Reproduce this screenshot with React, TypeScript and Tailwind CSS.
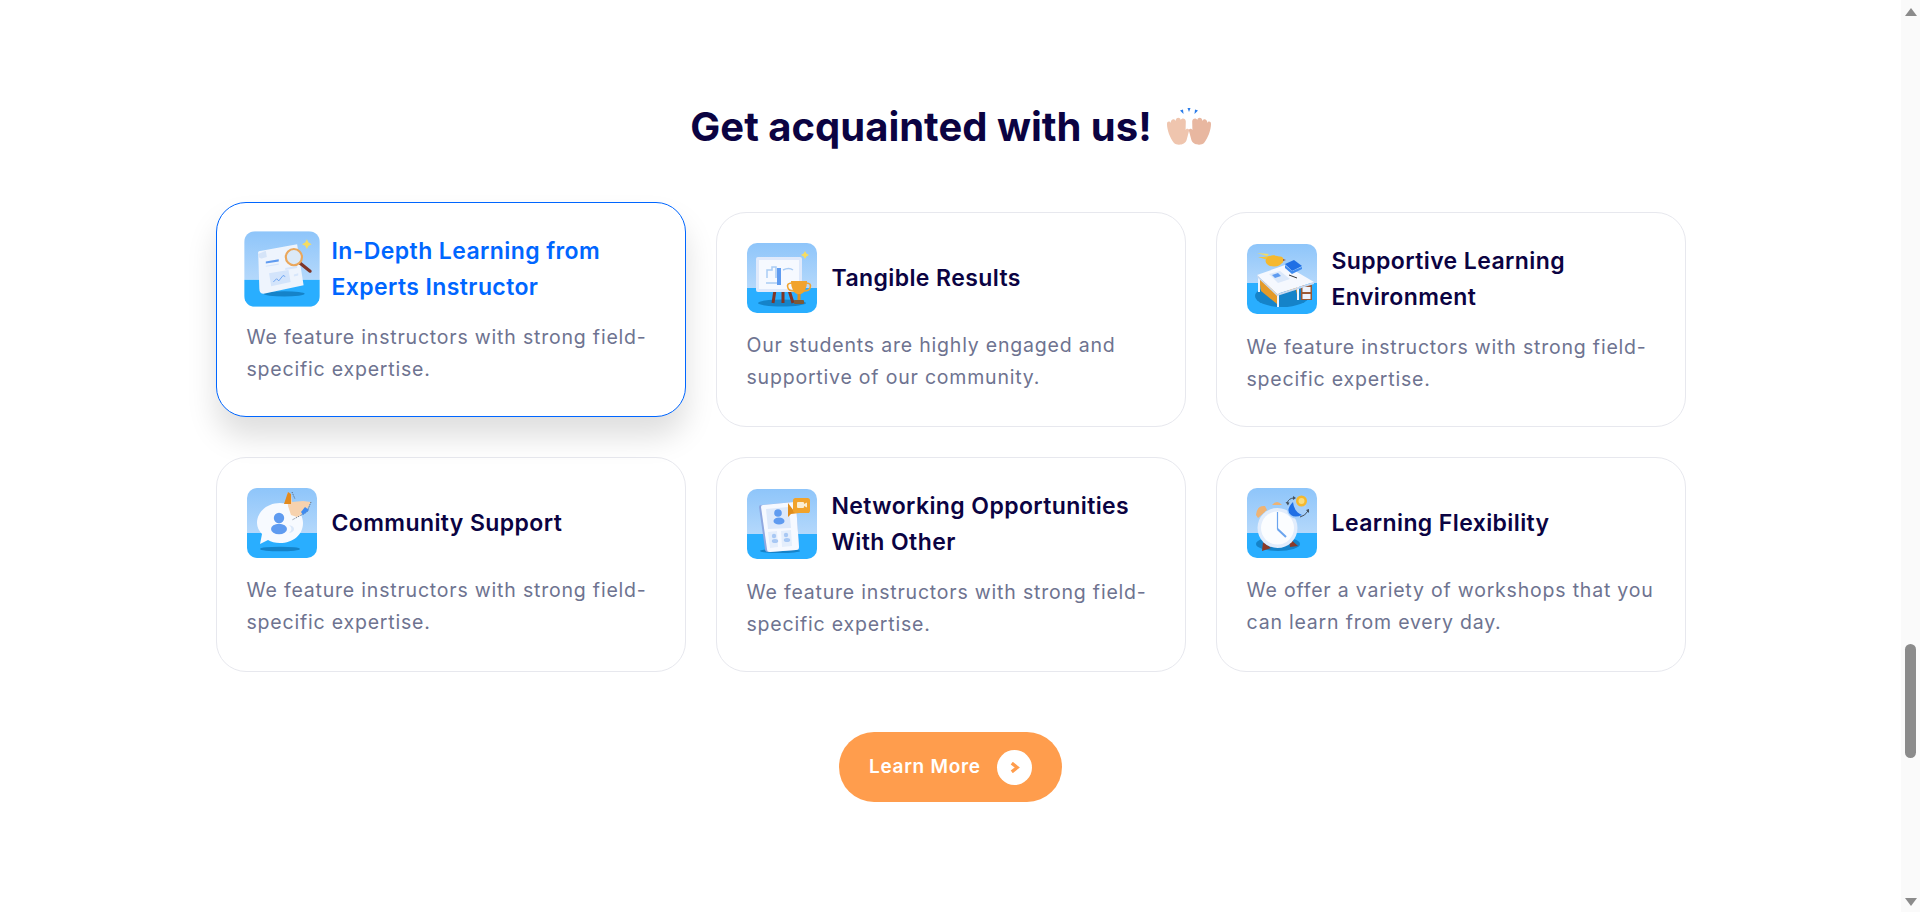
const poppins = "font-['Inter','Liberation_Sans',sans-serif]";

function Backdrop({ horizon = 45 }: { horizon?: number }) {
  return (
    <>
      <defs>
        <linearGradient id="sky" x1="0" y1="0" x2="0" y2="1">
          <stop offset="0" stopColor="#8ec5fa" />
          <stop offset="1" stopColor="#b4d8fb" />
        </linearGradient>
      </defs>
      <rect width="70" height={horizon} fill="url(#sky)" />
      <rect y={horizon} width="70" height={70 - horizon} fill="#29aeff" />
    </>
  );
}

function Star({ x, y, s = 4 }: { x: number; y: number; s?: number }) {
  return (
    <path
      d={`M${x} ${y - s}L${x + s * 0.35} ${y - s * 0.35}L${x + s} ${y}L${x + s * 0.35} ${y + s * 0.35}L${x} ${y + s}L${x - s * 0.35} ${y + s * 0.35}L${x - s} ${y}L${x - s * 0.35} ${y - s * 0.35}Z`}
      fill="#f6dc62"
    />
  );
}

function ResearchIcon() {
  return (
    <svg viewBox="0 0 70 70" className="block h-full w-full">
      <Backdrop />
      <ellipse cx="37" cy="58" rx="19" ry="2.5" fill="#1583c9" />
      <path d="M13 21Q12 18 16 18L49 12L55 50L18 58Q14 58 14 53Z" fill="#eef4fd" />
      <path d="M13 21Q13 26 17 25L21 24L20 18Z" fill="#d5e4f8" />
      <path d="M20 28L32 26V28L20 30Z" fill="#5f9bf0" />
      <path d="M20 32L32 30V31L20 33ZM38 34L49 32V34L38 36ZM46 40L50 39V41L46 42Z" fill="#d7e6fb" />
      <path d="M23 39L41 36L43 47L25 51Z" fill="#d3e4fb" />
      <path d="M27 47L30 44L32 46L36 41L38 42" fill="none" stroke="#5f9bf0" strokeWidth="0.8" />
      <path d="M51 29L61 37" stroke="#7f3527" strokeWidth="3" strokeLinecap="round" />
      <circle cx="46" cy="24" r="7.5" fill="#dbe9f7" stroke="#eaa75c" strokeWidth="2" />
      <Star x={58} y={12} s={4.5} />
    </svg>
  );
}

function ResultsIcon() {
  return (
    <svg viewBox="0 0 70 70" className="block h-full w-full">
      <Backdrop />
      <ellipse cx="35" cy="60" rx="24" ry="3.5" fill="#1583c9" />
      <path d="M28 47L26 60M36 47V60M42 47L46 60" stroke="#7f3527" strokeWidth="3" />
      <rect x="9" y="14" width="46" height="35" rx="2" fill="#dfe9fb" />
      <rect x="12" y="17" width="40" height="29" fill="#f6f9ff" />
      <path d="M20 35V27H25V24H29V35" fill="none" stroke="#a9cbf4" strokeWidth="1.5" />
      <rect x="30" y="25" width="4" height="17" fill="#5f9bf0" />
      <path d="M19 40H30M36 27Q42 24 46 27" fill="none" stroke="#a9cbf4" strokeWidth="1.5" />
      <path d="M44 38H60Q60 50 52 52Q44 50 44 38Z" fill="#f1a32c" />
      <path d="M45 40Q39 40 41 45Q42 48 47 48M59 40Q65 40 63 45Q62 48 57 48" fill="none" stroke="#f1a32c" strokeWidth="1.6" />
      <rect x="50.5" y="51" width="3" height="6" fill="#e08d1c" />
      <rect x="47" y="57" width="10" height="4" rx="1" fill="#7c5a38" />
      <Star x={58} y={12} s={4} />
    </svg>
  );
}

function DeskIcon() {
  return (
    <svg viewBox="0 0 70 70" className="block h-full w-full">
      <Backdrop horizon={39} />
      <ellipse cx="35" cy="52" rx="27" ry="11" fill="#1583c9" />
      <path d="M12 34L30 47V60L14 47Z" fill="#e49a28" />
      <path d="M34 47L51 39V55L49 46Z" fill="#e49a28" />
      <path d="M11 33V48H13V35ZM30 48V63H32V48ZM50 42V56H52V42Z" fill="#eef4fd" />
      <rect x="54" y="41" width="11" height="15" fill="#9b5a34" />
      <rect x="55.5" y="43" width="8" height="5" fill="#eef4fd" />
      <rect x="55.5" y="50" width="8" height="5" fill="#eef4fd" />
      <path d="M10 31L38 21L67 38L30 50Z" fill="#f5f8fe" />
      <path d="M10 31L30 50L67 38V40L30 52L10 33Z" fill="#c7d8ef" />
      <path d="M22 30L33 27L43 35L31 39Z" fill="#dbe8fa" />
      <path d="M25 31L31 29L34 32L28 34Z" fill="#5f9bf0" />
      <path d="M38 20L47 16L55 22L45 27Z" fill="#1f6fe5" />
      <path d="M38 24L45 30L55 25V23L45 27L38 21Z" fill="#3f8bef" />
      <path d="M42 31L50 34" stroke="#222" strokeWidth="0.9" />
      <path d="M10 9L20 12L22 10L10 9Z" fill="#f6dc62" />
      <path d="M11 13L24 17L28 11L16 13Z" fill="#f3c63e" />
      <ellipse cx="27" cy="17" rx="8.5" ry="5.5" fill="#f5b82e" />
      <circle cx="33" cy="16" r="3.5" fill="#f5b82e" />
      <path d="M36 15L39 16L36 17Z" fill="#9b5a34" />
    </svg>
  );
}

function CommunityIcon() {
  return (
    <svg viewBox="0 0 70 70" className="block h-full w-full">
      <Backdrop />
      <ellipse cx="33" cy="61" rx="20" ry="2.3" fill="#1583c9" />
      <path d="M33 15C46 15 56 24 56 35C56 47 46 55 33 55C28 55 24 54 21 52L13 56L15 46C12 43 10 39 10 35C10 24 20 15 33 15Z" fill="#f7faff" />
      <circle cx="32" cy="30" r="5.2" fill="#5f9bf0" />
      <ellipse cx="32" cy="41" rx="8" ry="5.3" fill="#5f9bf0" />
      <path d="M42 37Q47 41 42 45Q47 44 47 41Q47 38 42 37Z" fill="#dbe8fa" />
      <path d="M40 5L44 6L45 14L56 13L64 14L58 24L50 29L44 27L41 18Z" fill="#f7d2ae" />
      <path d="M41 4L44 6L44 16L37 16Z" fill="#e38a1e" />
      <path d="M45 4L48 11M64 14L60 24L45 32" fill="none" stroke="#3d4a60" strokeWidth="0.8" strokeDasharray="1 1" />
      <path d="M58 19L62 22L56 27L54 24Z" fill="#3f8bef" />
    </svg>
  );
}

function NetworkIcon() {
  return (
    <svg viewBox="0 0 70 70" className="block h-full w-full">
      <Backdrop />
      <ellipse cx="33" cy="62" rx="20" ry="2" fill="#1583c9" />
      <path d="M14 16L47 13Q49 13 49 15L52 58Q52 61 49 61L21 63Q18 63 18 60L12 18Q12 16 14 16Z" fill="#8fa8e0" />
      <path d="M16 16L47 13Q49 13 49 15L52 58Q52 61 49 61L23 63Q20 63 20 60L14 18Q14 16 16 16Z" fill="#f6f9ff" />
      <path d="M19 20L42 18L44 39L21 40Z" fill="#dde9fb" />
      <circle cx="31" cy="24" r="3.8" fill="#5f9bf0" />
      <ellipse cx="32" cy="32" rx="5.5" ry="3.6" fill="#5f9bf0" />
      <path d="M21 43L30 42L31 58L23 59ZM34 42L44 41L45 57L35 58Z" fill="#e4eefc" />
      <circle cx="27" cy="47" r="2.2" fill="#a8c8f4" />
      <ellipse cx="28" cy="52" rx="3.2" ry="2" fill="#a8c8f4" />
      <circle cx="39" cy="46" r="2.2" fill="#a8c8f4" />
      <ellipse cx="40" cy="51" rx="3.2" ry="2" fill="#a8c8f4" />
      <path d="M41 28V14L47 22L52 24L44 25Z" fill="#e08d1c" />
      <rect x="46" y="9" width="17" height="15" rx="2.5" fill="#f1a32c" />
      <path d="M54 24H62L62 20Z" fill="#f1a32c" />
      <rect x="50" y="13" width="7" height="6" rx="1" fill="#fbeed2" />
      <path d="M57 15L60 13.5V18.5L57 17Z" fill="#fbeed2" />
    </svg>
  );
}

function ClockIcon() {
  return (
    <svg viewBox="0 0 70 70" className="block h-full w-full">
      <Backdrop />
      <ellipse cx="31" cy="56" rx="22" ry="7" fill="#1583c9" />
      <path d="M16 54L15 63L24 60ZM42 50L51 58L43 59Z" fill="#8a3a28" />
      <path d="M9 27Q10 17 18 18L20 22L11 30Z" fill="#eeb374" />
      <path d="M25 17Q30 11 35 17Z" fill="#eeb374" />
      <circle cx="30.5" cy="40" r="20" fill="#e2edfc" />
      <circle cx="30.5" cy="40" r="16.5" fill="#fbfdff" />
      <path d="M30.5 24V41" fill="none" stroke="#6aa4ee" strokeWidth="1.2" />
      <path d="M30.5 41L39 49" stroke="#6aa4ee" strokeWidth="2" />
      <circle cx="50" cy="21" r="10" fill="#a6d0fb" />
      <path d="M46 14Q38 22 44 27Q48 30 55 27Q47 24 46 14Z" fill="#1f6fe5" />
      <circle cx="54.5" cy="13" r="5.5" fill="#f5b82e" />
      <circle cx="54.5" cy="13" r="3" fill="#fbdc7a" />
      <path d="M47 10Q42 10 40 15M53 29Q58 28 61 23" fill="none" stroke="#45525f" strokeWidth="1" />
      <path d="M46 8L49 10L46 12ZM38.5 14L41 17.5L42.5 14.5ZM59 22L62 21L62 25Z" fill="#45525f" />
    </svg>
  );
}

function Hands() {
  // one fat raised hand, mirrored for the other side
  const hand = "M7 35C3 30 0 22 0 16C0 13 3 13 3.6 15C3.6 11 7.6 10 8.6 13C8.8 9 13 8.6 13.8 12C14.6 9.6 18.8 10 18.8 13.4L18.6 22C19.6 20 22.6 20.4 22 23L19.6 32C18.4 37 10 38 7 35Z";
  return (
    <svg viewBox="0 0 44 38" className="h-[38px] w-[44px] shrink-0">
      <path d="M20.5 0H23.5L22 4ZM13 2.5L16 1.5L16.5 6ZM28 1.5L31 2.5L27.5 6Z" fill="#2b7de9" />
      <path d={hand} fill="#efc5ae" />
      <g transform="translate(44 0) scale(-1 1)">
        <path d={hand} fill="#e8b7a0" />
      </g>
    </svg>
  );
}

const cards = [
  { icon: <ResearchIcon />, title: "In-Depth Learning from Experts Instructor", text: "We feature instructors with strong field-specific expertise.", active: true },
  { icon: <ResultsIcon />, title: "Tangible Results", text: "Our students are highly engaged and supportive of our community." },
  { icon: <DeskIcon />, title: "Supportive Learning Environment", text: "We feature instructors with strong field-specific expertise." },
  { icon: <CommunityIcon />, title: "Community Support", text: "We feature instructors with strong field-specific expertise." },
  { icon: <NetworkIcon />, title: "Networking Opportunities With Other", text: "We feature instructors with strong field-specific expertise." },
  { icon: <ClockIcon />, title: "Learning Flexibility", text: "We offer a variety of workshops that you can learn from every day." },
];

function Card({ icon, title, text, active }: { icon: React.ReactNode; title: string; text: string; active?: boolean }) {
  return (
    <div
      className={
        active
          ? "rounded-[30px] border border-[#0066ff] bg-white p-[30px] pb-[31px] -translate-y-[10px] shadow-[0_20px_30px_rgba(0,0,0,0.13)]"
          : "rounded-[30px] border border-[#e7e8ee] bg-white p-[30px] pb-[31px]"
      }
    >
      <div className="flex items-center gap-[15px]">
        <div className={active ? "h-[70px] w-[70px] shrink-0 overflow-hidden rounded-[10px] scale-[1.08]" : "h-[70px] w-[70px] shrink-0 overflow-hidden rounded-[10px]"}>
          {icon}
        </div>
        <h3 className={active ? "text-[23px] font-semibold leading-[36px] tracking-[0.4px] text-[#0066ff]" : "text-[23px] font-semibold leading-[36px] tracking-[0.4px] text-[#0b0342]"}>
          {title}
        </h3>
      </div>
      <p className="mt-[16px] text-[19.5px] leading-[32px] tracking-[0.8px] text-[#6e7390]">{text}</p>
    </div>
  );
}

export default function App() {
  return (
    <div className={`flex h-screen overflow-hidden bg-white ${poppins}`}>
      <main className="flex flex-1 flex-col items-center pt-[101px]">
        <h2 className="flex items-center gap-[15px] text-[40px] font-bold leading-[52px] text-[#0b0342]">
          Get acquainted with us!
          <Hands />
        </h2>
        <div className="mt-[59px] grid w-[1470px] grid-cols-3 gap-[30px]">
          {cards.map((card) => (
            <Card key={card.title} {...card} />
          ))}
        </div>
        <button className="mt-[60px] flex h-[70px] w-[223px] items-center justify-between rounded-full bg-[#ff9d4d] pl-[30px] pr-[30px] text-[19px] font-semibold tracking-[0.7px] text-white">
          Learn More
          <span className="flex h-[35px] w-[35px] items-center justify-center rounded-full bg-white">
            <svg viewBox="0 0 10 10" className="h-[11px] w-[11px]">
              <path d="M2.5 1L7.5 5L2.5 9" fill="none" stroke="#ff9d4d" strokeWidth="3" />
            </svg>
          </span>
        </button>
      </main>
      <aside className="flex w-[19px] shrink-0 flex-col items-center bg-[#fafafa]">
        <div className="mt-[8px] h-0 w-0 border-x-[6px] border-b-[8px] border-x-transparent border-b-[#8b8b8b]" />
        <div className="mt-[628px] h-[114px] w-[11px] rounded-full bg-[#8b8b8b]" />
        <div className="mt-auto mb-[6px] h-0 w-0 border-x-[6px] border-t-[8px] border-x-transparent border-t-[#8b8b8b]" />
      </aside>
    </div>
  );
}
